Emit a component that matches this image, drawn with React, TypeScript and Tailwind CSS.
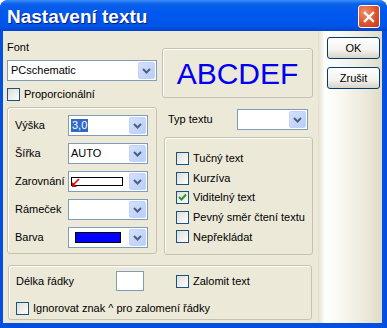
import React from "react";

const font = "font-['Liberation_Sans',Arial,sans-serif]";

function DropBtn() {
  return (
    <div className="w-[17px] h-[17px] mr-[1px] rounded-[2px] bg-[linear-gradient(135deg,#D4E1FC,#B9CDF7)] border border-[#C3D3FD] flex items-center justify-center">
      <svg width="9" height="6" viewBox="0 0 9 6">
        <path d="M1 1 L4.5 4.5 L8 1" fill="none" stroke="#4D6185" strokeWidth="2" />
      </svg>
    </div>
  );
}

function Combo({ className, children }: { className: string; children?: React.ReactNode }) {
  return (
    <div className={`flex items-center h-[21px] border border-[#7F9DB9] bg-white ${className}`}>
      <div className="flex-1 flex items-center min-w-0 h-full">{children}</div>
      <DropBtn />
    </div>
  );
}

function Check({ label, checked }: { label: string; checked?: boolean }) {
  return (
    <div className="flex items-center h-[13px] whitespace-nowrap">
      <div className="w-[13px] h-[13px] border border-[#1C5180] bg-[linear-gradient(135deg,#DCDCD7,#FFFFFF)] flex items-center justify-center shrink-0">
        {checked && (
          <svg width="9" height="9" viewBox="0 0 9 9">
            <path d="M1 4 L3.5 6.5 L8 1.5" fill="none" stroke="#21A121" strokeWidth="2" />
          </svg>
        )}
      </div>
      <span className="ml-[4px] text-[11px] text-black">{label}</span>
    </div>
  );
}

function XpButton({ label }: { label: string }) {
  return (
    <div className="w-[53px] h-[22px] rounded-[3px] border border-[#003C74] bg-[linear-gradient(to_bottom,#FFFFFF,#F3F2EE_60%,#D8D3C8)] flex items-center justify-center text-[11px] text-black">
      {label}
    </div>
  );
}

const group = "border border-[#C5C2B2] rounded-[3px] shadow-[inset_1px_1px_0_#FFFFFF]";

export default function App() {
  const rows = ["Výška", "Šířka", "Zarovnání", "Rámeček", "Barva"];
  return (
    <div className={`w-[387px] h-[328px] bg-[#0350E0] rounded-t-[8px] flex flex-col overflow-hidden ${font}`}>
      {/* title bar */}
      <div className="h-[31px] shrink-0 flex items-center justify-between pl-[7px] pr-[7px] bg-[linear-gradient(to_bottom,#3D8EF8_0px,#0B61EA_4px,#0058EE_12px,#0055E8_26px,#0044CF_31px)]">
        <span className="pt-[3px] text-[19px] leading-[22px] font-bold text-white [text-shadow:1px_1px_#0A1883]">
          Nastavení textu
        </span>
        <div className="mt-[2px] w-[22px] h-[23px] rounded-[3px] border border-white bg-[radial-gradient(circle_at_30%_30%,#F0906A,#E0522E_55%,#C23A17)] flex items-center justify-center">
          <svg width="12" height="12" viewBox="0 0 12 12">
            <path d="M2 2 L10 10 M10 2 L2 10" stroke="white" strokeWidth="2.4" strokeLinecap="square" />
          </svg>
        </div>
      </div>

      {/* client */}
      <div className="flex flex-1 ml-[3px] mr-[5px] mb-[5px] bg-[#ECE9D8] text-[11px] text-black">
        <div className="w-[315px] shrink-0 flex flex-col pl-[4px]">
          {/* top row */}
          <div className="flex gap-[5px]">
            <div className="w-[150px] flex flex-col pt-[9px]">
              <div className="h-[14px] leading-[14px]">Font</div>
              <Combo className="mt-[6px] w-[150px]">
                <span className="pl-[3px]">PCschematic</span>
              </Combo>
              <div className="mt-[7px]">
                <Check label="Proporcionální" />
              </div>
            </div>
            <div className="pt-[17px]">
              <div className={`w-[151px] h-[50px] ${group} flex items-center justify-center text-[30px] text-[#0000F0]`}>
                ABCDEF
              </div>
            </div>
          </div>

          {/* middle row */}
          <div className="flex gap-[7px] mt-[6px]">
            <div className={`w-[150px] h-[147px] ${group} flex flex-col gap-[7px] pt-[7px] pl-[7px] pr-[8px]`}>
              {rows.map((r) => (
                <div key={r} className="flex items-center h-[21px]">
                  <span className="w-[53px] shrink-0">{r}</span>
                  <Combo className="w-[80px]">
                    {r === "Výška" && (
                      <span className="ml-[2px] px-[1px] leading-[13px] bg-[#316AC5] text-white">3,0</span>
                    )}
                    {r === "Šířka" && <span className="ml-[2px]">AUTO</span>}
                    {r === "Zarovnání" && (
                      <div className="relative ml-[2px] w-[52px] h-[9px] border border-black bg-white">
                        <svg className="absolute left-[-1px] top-[0px]" width="9" height="10" viewBox="0 0 9 10">
                          <path d="M8 1 L2 7" stroke="#E00000" strokeWidth="1.6" />
                          <path d="M1 9 L1 4 L6 9 Z" fill="#E00000" />
                        </svg>
                      </div>
                    )}
                    {r === "Barva" && (
                      <div className="ml-[6px] w-[46px] h-[11px] border border-black bg-[#0000FF]" />
                    )}
                  </Combo>
                </div>
              ))}
            </div>
            <div className="w-[149px] flex flex-col">
              <div className="flex items-center h-[21px] mt-[2px]">
                <span className="pl-[4px] w-[73px]">Typ textu</span>
                <Combo className="w-[71px]" />
              </div>
              <div className={`mt-[7px] h-[118px] ${group} flex flex-col gap-[6.6px] pt-[14px] pl-[11px]`}>
                <Check label="Tučný text" />
                <Check label="Kurzíva" />
                <Check label="Viditelný text" checked />
                <Check label="Pevný směr čtení textu" />
                <Check label="Nepřekládat" />
              </div>
            </div>
          </div>

          {/* bottom group */}
          <div className={`mt-[10px] ml-[1px] w-[304px] h-[55px] ${group} flex flex-col pt-[5px] pl-[7px]`}>
            <div className="flex items-center h-[20px]">
              <span className="w-[100px]">Délka řádky</span>
              <div className="w-[28px] h-[20px] border border-[#7F9DB9] bg-white" />
              <div className="ml-[32px]">
                <Check label="Zalomit text" />
              </div>
            </div>
            <div className="mt-[11px]">
              <Check label="Ignorovat znak ^ pro zalomení řádky" />
            </div>
          </div>
        </div>

        {/* right button panel */}
        <div className="flex-1 flex flex-col pl-[9px] pt-[6px] gap-[8px] bg-[linear-gradient(to_right,#E3DFCB_0px,#FFFFFF_7px,#FAF9F3_20px,#EEEBDD_45px,#E0DCC6_64px)]">
          <XpButton label="OK" />
          <XpButton label="Zrušit" />
        </div>
      </div>
    </div>
  );
}
